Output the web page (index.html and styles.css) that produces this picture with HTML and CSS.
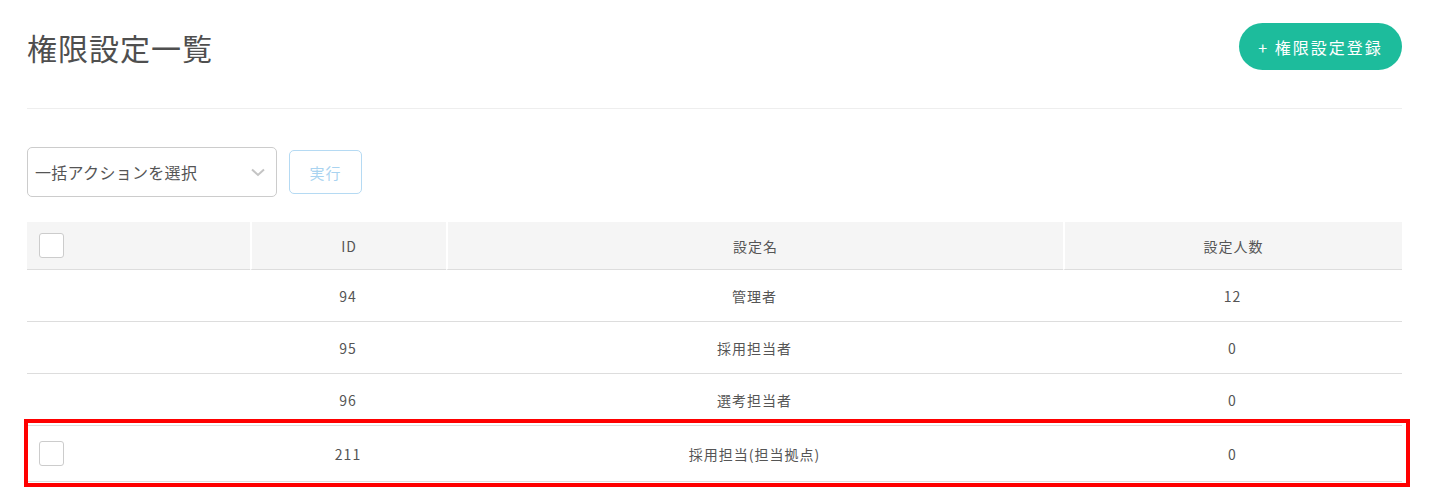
FILE: index.html
```html
<!DOCTYPE html>
<html lang="ja">
<head>
    <meta charset="UTF-8">
    <meta name="viewport" content="width=device-width, initial-scale=1.0">
    <title>権限設定一覧</title>
    <link rel="stylesheet" href="styles.css">
</head>
<body>
    <div class="page">
        <div class="page-header">
            <h1>権限設定一覧</h1>
            <button class="btn-add">+ 権限設定登録</button>
        </div>

        <div class="toolbar">
            <div class="select-box">
                <span>一括アクションを選択</span>
                <svg width="14" height="9" viewBox="0 0 14 9"><path d="M1 1.5 L7 7 L13 1.5" fill="none" stroke="#c4c4c4" stroke-width="2"/></svg>
            </div>
            <button class="btn-run">実行</button>
        </div>

        <div class="table-wrap">
            <table class="list">
                <colgroup>
                    <col class="col-check">
                    <col class="col-id">
                    <col class="col-name">
                    <col class="col-count">
                </colgroup>
                <thead>
                    <tr>
                        <th class="check"><span class="checkbox"></span></th>
                        <th>ID</th>
                        <th>設定名</th>
                        <th>設定人数</th>
                    </tr>
                </thead>
                <tbody>
                    <tr>
                        <td></td>
                        <td>94</td>
                        <td>管理者</td>
                        <td>12</td>
                    </tr>
                    <tr>
                        <td></td>
                        <td>95</td>
                        <td>採用担当者</td>
                        <td>0</td>
                    </tr>
                    <tr>
                        <td></td>
                        <td>96</td>
                        <td>選考担当者</td>
                        <td>0</td>
                    </tr>
                    <tr class="row-check">
                        <td class="check"><span class="checkbox"></span></td>
                        <td>211</td>
                        <td>採用担当(担当拠点)</td>
                        <td>0</td>
                    </tr>
                </tbody>
            </table>
            <!-- annotation frame around the new row -->
            <div class="highlight"></div>
        </div>
    </div>
</body>
</html>
```

FILE: styles.css
```css
body {
    margin: 0;
    font-family: "Noto Sans CJK JP", "Noto Sans", sans-serif;
    color: #555;
    background: #fff;
}
.page {
    padding: 23px 27px 22px;
}
.page-header {
    display: flex;
    justify-content: space-between;
    align-items: center;
    padding-bottom: 38px;
    border-bottom: 1px solid #eee;
}
.page-header h1 {
    margin: 0;
    font-size: 30px;
    font-weight: 400;
    line-height: 1;
    letter-spacing: 1px;
    color: #4f4f4f;
}
.btn-add {
    height: 47px;
    width: 163px;
    background: #1dbc9c;
    color: #fff;
    border: none;
    border-radius: 24px;
    font-family: inherit;
    font-size: 16px;
    letter-spacing: 2px;
    padding: 0;
    cursor: pointer;
}
.toolbar {
    display: flex;
    align-items: center;
    gap: 12px;
    margin-top: 38px;
}
.select-box {
    width: 250px;
    height: 50px;
    box-sizing: border-box;
    border: 1px solid #ccc;
    border-radius: 5px;
    display: flex;
    align-items: center;
    justify-content: space-between;
    padding: 0 11px 0 7px;
    font-size: 16px;
    letter-spacing: 0.3px;
    color: #555;
}
.btn-run {
    width: 73px;
    height: 44px;
    background: #fff;
    border: 1px solid #b5daf3;
    border-radius: 5px;
    color: #a9d3f0;
    font-family: inherit;
    font-size: 15px;
    letter-spacing: 1px;
    padding: 0;
}
.table-wrap {
    position: relative;
    margin-top: 25px;
}
.list {
    width: 100%;
    border-collapse: separate;
    border-spacing: 0;
    font-size: 14px;
    letter-spacing: 1px;
    table-layout: fixed;
}
.col-check { width: 223px; }
.col-id { width: 196px; }
.col-name { width: 617px; }
.col-count { width: 339px; }
.list th {
    background: #f5f5f5;
    font-weight: 400;
    height: 47px;
    padding: 0;
    border-bottom: 1px solid #ddd;
    border-left: 2px solid #fff;
}
.list th:first-child {
    border-left: none;
}
.list td {
    height: 51px;
    padding: 0;
    text-align: center;
    border-bottom: 1px solid #ddd;
}
.list .row-check td {
    height: 55px;
}
.list .check {
    text-align: left;
    padding-left: 12px;
}
.checkbox {
    display: block;
    width: 25px;
    height: 25px;
    box-sizing: border-box;
    border: 1px solid #ccc;
    border-radius: 3px;
    background: #fff;
}
.highlight {
    position: absolute;
    left: -3px;
    top: 197px;
    width: 1386px;
    height: 68px;
    box-sizing: border-box;
    border: 4px solid #f00;
}
```
